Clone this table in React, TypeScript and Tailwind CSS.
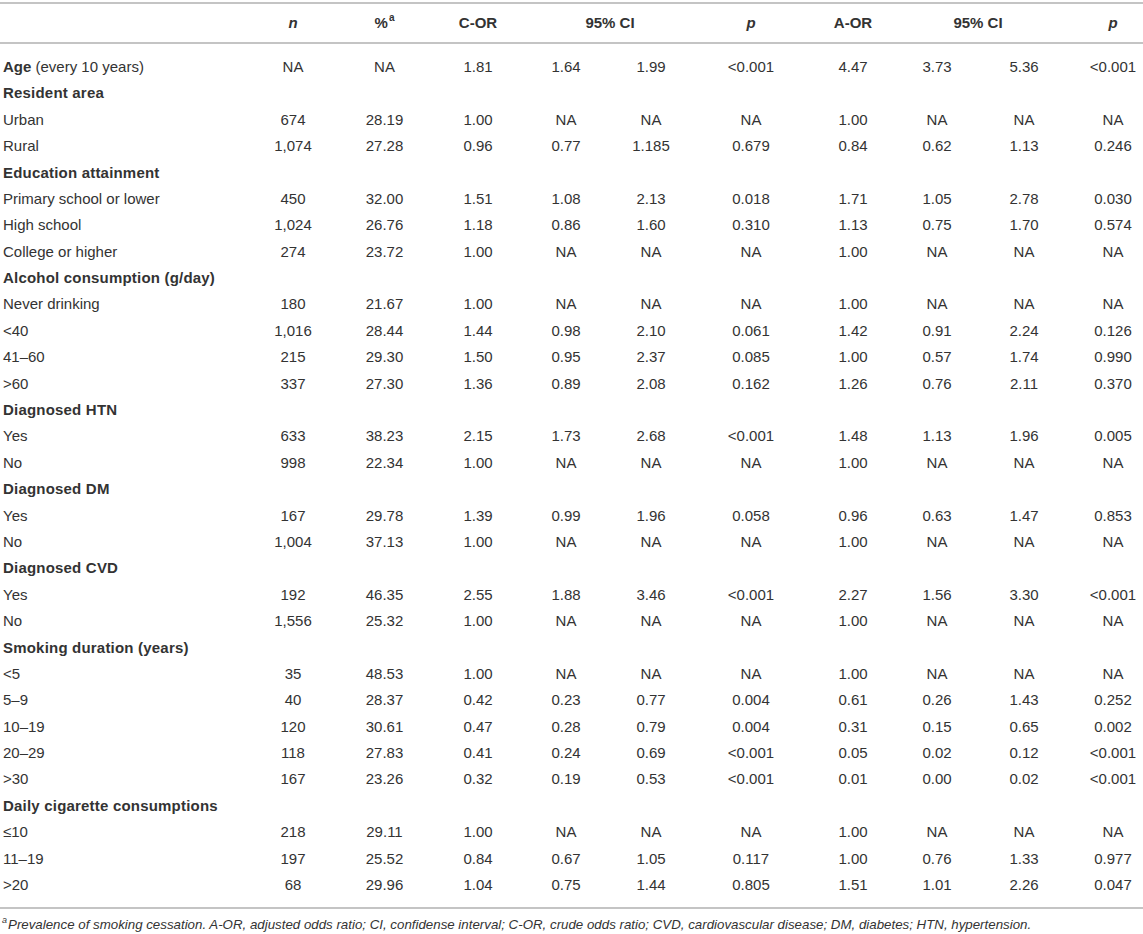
import React from "react";

type Row = { label: React.ReactNode; vals?: string[]; head?: boolean };

const NA3 = ["NA", "NA", "NA"];

const rows: Row[] = [
  {
    label: (
      <>
        <span className="font-bold">Age</span> (every 10 years)
      </>
    ),
    vals: ["NA", "NA", "1.81", "1.64", "1.99", "<0.001", "4.47", "3.73", "5.36", "<0.001"],
  },
  { label: "Resident area", head: true },
  { label: "Urban", vals: ["674", "28.19", "1.00", ...NA3, "1.00", ...NA3] },
  { label: "Rural", vals: ["1,074", "27.28", "0.96", "0.77", "1.185", "0.679", "0.84", "0.62", "1.13", "0.246"] },
  { label: "Education attainment", head: true },
  { label: "Primary school or lower", vals: ["450", "32.00", "1.51", "1.08", "2.13", "0.018", "1.71", "1.05", "2.78", "0.030"] },
  { label: "High school", vals: ["1,024", "26.76", "1.18", "0.86", "1.60", "0.310", "1.13", "0.75", "1.70", "0.574"] },
  { label: "College or higher", vals: ["274", "23.72", "1.00", ...NA3, "1.00", ...NA3] },
  { label: "Alcohol consumption (g/day)", head: true },
  { label: "Never drinking", vals: ["180", "21.67", "1.00", ...NA3, "1.00", ...NA3] },
  { label: "<40", vals: ["1,016", "28.44", "1.44", "0.98", "2.10", "0.061", "1.42", "0.91", "2.24", "0.126"] },
  { label: "41–60", vals: ["215", "29.30", "1.50", "0.95", "2.37", "0.085", "1.00", "0.57", "1.74", "0.990"] },
  { label: ">60", vals: ["337", "27.30", "1.36", "0.89", "2.08", "0.162", "1.26", "0.76", "2.11", "0.370"] },
  { label: "Diagnosed HTN", head: true },
  { label: "Yes", vals: ["633", "38.23", "2.15", "1.73", "2.68", "<0.001", "1.48", "1.13", "1.96", "0.005"] },
  { label: "No", vals: ["998", "22.34", "1.00", ...NA3, "1.00", ...NA3] },
  { label: "Diagnosed DM", head: true },
  { label: "Yes", vals: ["167", "29.78", "1.39", "0.99", "1.96", "0.058", "0.96", "0.63", "1.47", "0.853"] },
  { label: "No", vals: ["1,004", "37.13", "1.00", ...NA3, "1.00", ...NA3] },
  { label: "Diagnosed CVD", head: true },
  { label: "Yes", vals: ["192", "46.35", "2.55", "1.88", "3.46", "<0.001", "2.27", "1.56", "3.30", "<0.001"] },
  { label: "No", vals: ["1,556", "25.32", "1.00", ...NA3, "1.00", ...NA3] },
  { label: "Smoking duration (years)", head: true },
  { label: "<5", vals: ["35", "48.53", "1.00", ...NA3, "1.00", ...NA3] },
  { label: "5–9", vals: ["40", "28.37", "0.42", "0.23", "0.77", "0.004", "0.61", "0.26", "1.43", "0.252"] },
  { label: "10–19", vals: ["120", "30.61", "0.47", "0.28", "0.79", "0.004", "0.31", "0.15", "0.65", "0.002"] },
  { label: "20–29", vals: ["118", "27.83", "0.41", "0.24", "0.69", "<0.001", "0.05", "0.02", "0.12", "<0.001"] },
  { label: ">30", vals: ["167", "23.26", "0.32", "0.19", "0.53", "<0.001", "0.01", "0.00", "0.02", "<0.001"] },
  { label: "Daily cigarette consumptions", head: true },
  { label: "≤10", vals: ["218", "29.11", "1.00", ...NA3, "1.00", ...NA3] },
  { label: "11–19", vals: ["197", "25.52", "0.84", "0.67", "1.05", "0.117", "1.00", "0.76", "1.33", "0.977"] },
  { label: ">20", vals: ["68", "29.96", "1.04", "0.75", "1.44", "0.805", "1.51", "1.01", "2.26", "0.047"] },
];

const grid =
  "grid grid-cols-[248px_90px_93px_94px_82px_88px_112px_92px_76px_98px_70px] items-center";

export default function App() {
  return (
    <div
      className="w-[1143px] bg-white text-[#333] text-[15px]"
      style={{ fontFamily: '"Liberation Sans", Arial, sans-serif' }}
    >
      <div className="pt-[2px]">
        <div className="border-t-2 border-b-2 border-[#c4c4c4]">
          <div className={`${grid} h-[38px] font-bold text-center`}>
            <div />
            <div className="italic">n</div>
            <div>
              %<span className="text-[10px] align-top relative -top-[2px] ml-[1px]">a</span>
            </div>
            <div>C-OR</div>
            <div className="col-span-2">95% CI</div>
            <div className="italic">p</div>
            <div>A-OR</div>
            <div className="col-span-2 pr-[16px]">95% CI</div>
            <div className="italic pl-[10px]">p</div>
          </div>
        </div>
        <div className="pt-[10px] pb-[8px] border-b-2 border-[#c4c4c4]">
          {rows.map((r, i) => (
            <div key={i} className={`${grid} h-[26.4px]`}>
              <div className={`pl-[3px] whitespace-nowrap ${r.head ? "font-bold tracking-[0.2px]" : ""}`}>{r.label}</div>
              {r.vals &&
                r.vals.map((v, j) => (
                  <div key={j} className={`text-center whitespace-nowrap ${j === 9 ? "pl-[10px]" : ""}`}>
                    {v}
                  </div>
                ))}
            </div>
          ))}
        </div>
        <div className="pt-[6px] pl-[2px] text-[13.3px] italic whitespace-nowrap">
          <span className="text-[9px] align-top relative -top-[1px] mr-[1px]">a</span>Prevalence of smoking cessation.
          A-OR, adjusted odds ratio; CI, confidense interval; C-OR, crude odds ratio; CVD, cardiovascular disease; DM,
          diabetes; HTN, hypertension.
        </div>
      </div>
    </div>
  );
}
